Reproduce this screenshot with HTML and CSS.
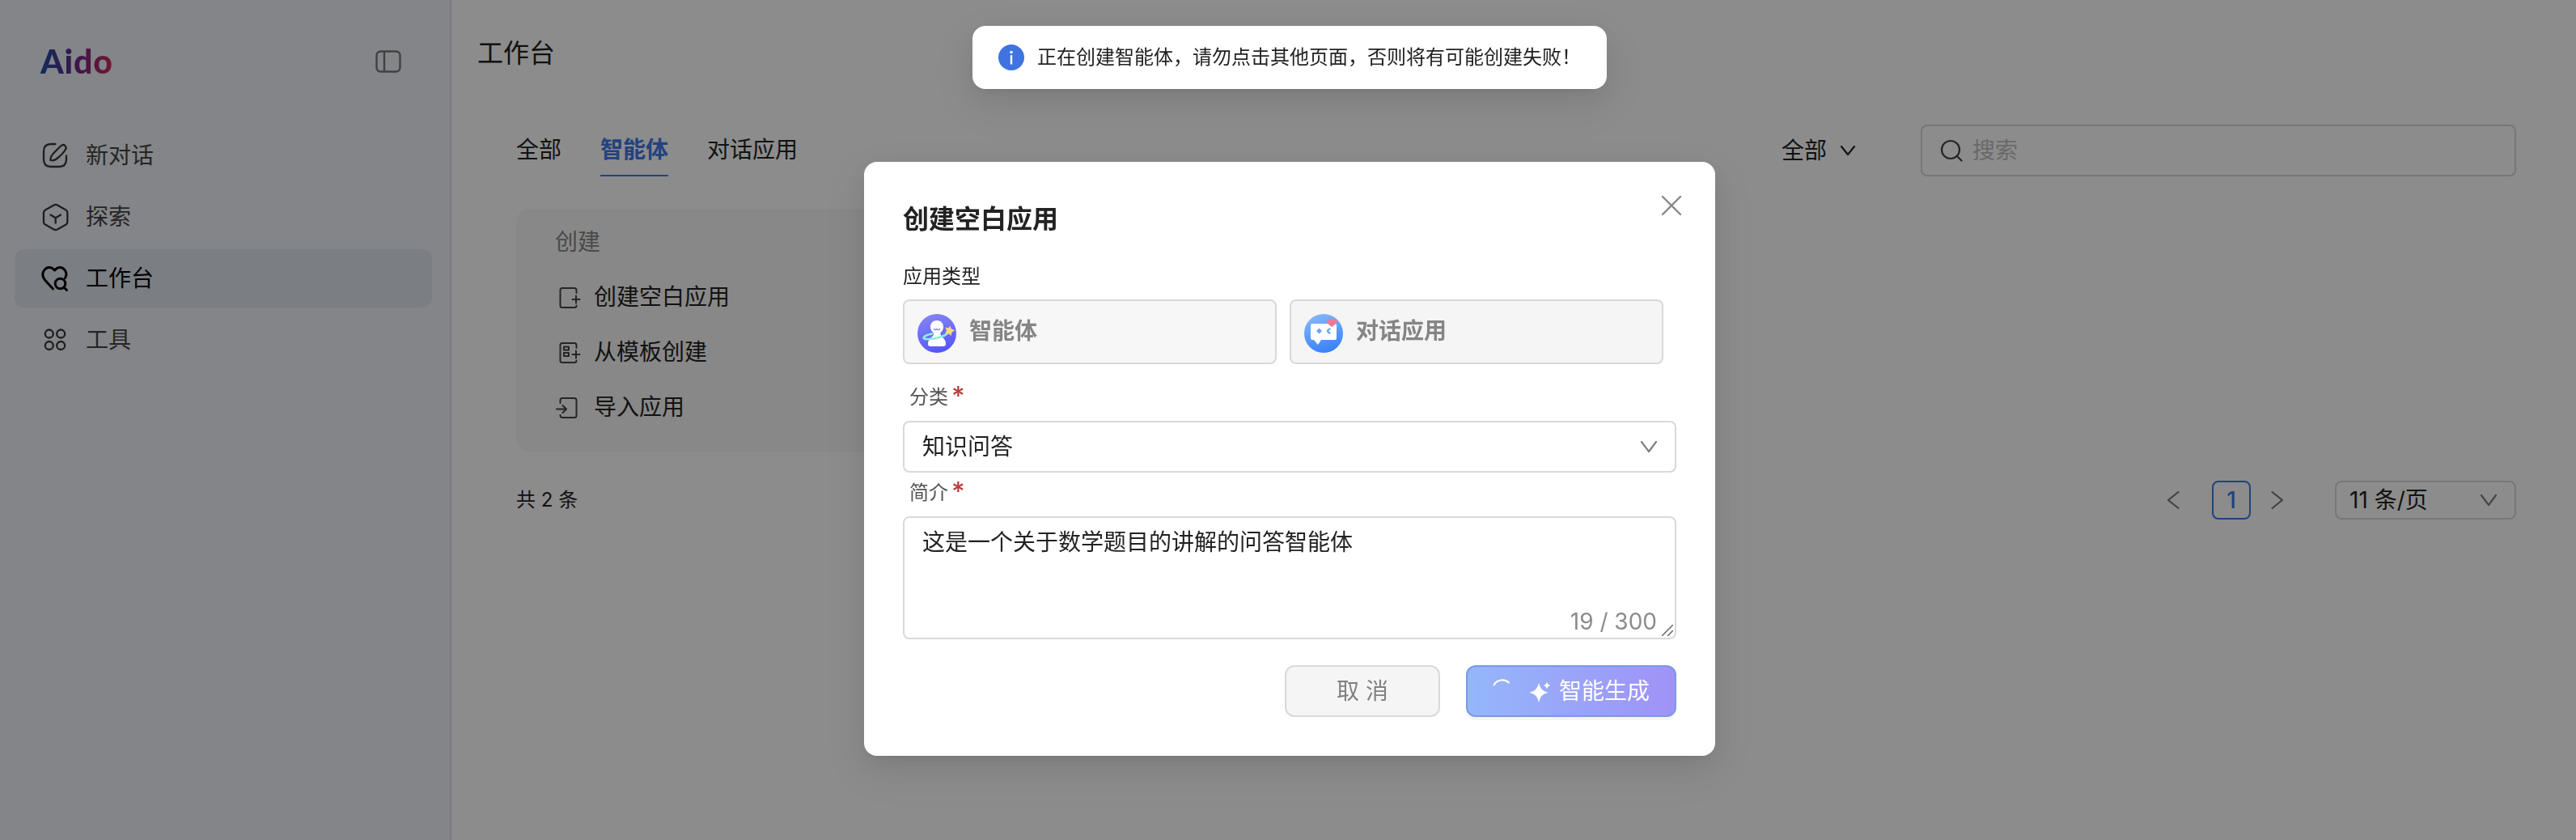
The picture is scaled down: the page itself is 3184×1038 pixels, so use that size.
FILE: index.html
```html
<!DOCTYPE html>
<html lang="zh-CN">
<head>
    <meta charset="UTF-8">
    <meta name="viewport" content="width=device-width, initial-scale=1.0">
    <title>Aido</title>
    <link rel="stylesheet" href="styles.css">
</head>
<body>
<div class="app">

    <aside class="sidebar">
        <div class="brand">
            <div class="logo">Aido</div>
            <svg class="toggle" viewBox="0 0 32 28"><rect x="1.5" y="1.5" width="29" height="25" rx="5"/><path d="M11 2v24"/></svg>
        </div>
        <nav>
            <a class="nav-item">
                <svg viewBox="0 0 36 36"><path d="M18.500 4H13Q4 4 4 13V23Q4 32 13 32H23Q32 32 32 23V18.500"/><path d="M12.500 24C12 20.500 14 17.500 17 14.500L25 6.500C29 3 33.500 7 30.500 11.500C28 15.500 24 19 21 21.500C18 24 15 25 12.500 24Z"/></svg>
                <span>新对话</span>
            </a>
            <a class="nav-item">
                <svg viewBox="0 0 36 36"><path d="M16.500 3.500Q18.700 2.300 21 3.500L31.500 9.500Q33.300 10.600 33.300 12.500V24.500Q33.300 26.500 31.500 27.500L21 33.500Q18.700 34.700 16.500 33.500L6 27.500Q4 26.500 4 24.500V12.500Q4 10.600 6 9.500Z"/><path d="M12.500 15.500L18.700 19.300L25 15.500M18.700 19.300V25.500"/></svg>
                <span>探索</span>
            </a>
            <a class="nav-item active">
                <svg viewBox="0 0 36 36"><path d="M15.500 31L5.500 20C-1 12 6 3.500 12 4.500C15 5 16 6.500 17.500 8C19 6.500 20 5 23 4.500C29 3.500 34.500 11 30.500 17.500"/><circle cx="24.500" cy="24.500" r="6.300"/><path d="M29 29L32.500 32.500"/></svg>
                <span>工作台</span>
            </a>
            <a class="nav-item">
                <svg viewBox="0 0 36 36"><circle cx="10.800" cy="10.500" r="5"/><circle cx="25.200" cy="10.500" r="5"/><circle cx="10.800" cy="25" r="5"/><circle cx="25.200" cy="25" r="5"/></svg>
                <span>工具</span>
            </a>
        </nav>
    </aside>

    <main>
        <h1>工作台</h1>
        <div class="content">
            <div class="toolbar">
                <div class="tabs">
                    <span class="tab">全部</span>
                    <span class="tab active">智能体</span>
                    <span class="tab">对话应用</span>
                </div>
                <div class="filters">
                    <div class="filter">全部
                        <svg viewBox="0 0 20 14"><path d="M2 2l8 10l8-10"/></svg>
                    </div>
                    <div class="search">
                        <svg viewBox="0 0 28 28"><circle cx="13" cy="13" r="11"/><path d="M21 21l5.500 5.500"/></svg>
                        <span>搜索</span>
                    </div>
                </div>
            </div>

            <section class="create-card">
                <div class="create-title">创建</div>
                <div class="create-item">
                    <svg viewBox="0 0 32 32"><path d="M26.500 11V7.500Q26.500 5 24 5H9Q6.500 5 6.500 7.500V26.500Q6.500 29 9 29H24Q26.500 29 26.500 26.500M26 14.500v9M21.500 19h9"/></svg>
                    <span>创建空白应用</span>
                </div>
                <div class="create-item">
                    <svg viewBox="0 0 32 32"><path d="M26.500 11V7.500Q26.500 5 24 5H9Q6.500 5 6.500 7.500V26.500Q6.500 29 9 29H24Q26.500 29 26.500 26.500M26 14.500v9M21.500 19h9M11 9.500h6v4h-6zM11 17h6v4h-6z"/></svg>
                    <span>从模板创建</span>
                </div>
                <div class="create-item">
                    <svg viewBox="0 0 32 32"><path d="M6.500 11V7.500Q6.500 5 9 5H24Q26.500 5 26.500 7.500V26.500Q26.500 29 24 29H9Q6.500 29 6.500 26M2 18.500h11.500M9.500 14l4.500 4.500l-4.500 4.500"/></svg>
                    <span>导入应用</span>
                </div>
            </section>

            <div class="pager">
                <div class="total">共 2 条</div>
                <div class="pages">
                    <svg class="arrow" viewBox="0 0 16 24"><path d="M14.500 2L2 12l12.500 10"/></svg>
                    <span class="page">1</span>
                    <svg class="arrow" viewBox="0 0 16 24"><path d="M1.500 2L14 12L1.500 22"/></svg>
                    <div class="page-size">11 条/页
                        <svg viewBox="0 0 22 16"><path d="M2 2l9 12l9-12"/></svg>
                    </div>
                </div>
            </div>
        </div>
    </main>
</div>

<div class="mask">
    <div class="modal">
        <svg class="close" viewBox="0 0 26 26"><path d="M2 2l22 22M24 2L2 24"/></svg>
        <h2>创建空白应用</h2>
        <div class="label type-label">应用类型</div>
        <div class="types">
            <div class="type selected">
                <svg viewBox="0 0 48 48">
                    <defs><linearGradient id="agent" x1="0.300" y1="0" x2="0.600" y2="1"><stop offset="0" stop-color="#8484f5"/><stop offset="1" stop-color="#5555f8"/></linearGradient></defs>
                    <circle cx="24" cy="24" r="24" fill="url(#agent)"/>
                    <path d="M24 8C29 8 32 11.500 32 16C32 19 30.500 21.500 28.500 23C28 25 29 27 31 29C34 31 35 34 35 37Q35 40 32 40H16Q13 40 13 37C13 34 14 31 17 29C20 27 20.500 25 19.500 23C17.500 21.500 16 19 16 16C16 11.500 19 8 24 8Z" fill="#fff"/>
                    <path d="M20.500 18.500q1.800 2 3.500 0q1.800 2 3.500 0" fill="none" stroke="#8a8cf0" stroke-width="1.500"/>
                    <path d="M18 24.500C6 27 5 31 12 31C19 31.500 33 28 37 24" fill="none" stroke="#8cf0da" stroke-width="2.500" stroke-linecap="round"/>
                    <path d="M40 14.500l2 4l4.500 1.500l-4 2.500l-1 4.500l-3-3l-4.500 .5l2-4l-1.500-4l4 1z" fill="#fbdc7c"/>
                </svg>
                <span>智能体</span>
            </div>
            <div class="type">
                <svg viewBox="0 0 48 48">
                    <defs><linearGradient id="chat" x1="0.300" y1="0" x2="0.600" y2="1"><stop offset="0" stop-color="#83b8f8"/><stop offset="1" stop-color="#3880f8"/></linearGradient></defs>
                    <circle cx="24" cy="24" r="24" fill="url(#chat)"/>
                    <path d="M10 12H38Q40 12 40 14V30Q40 32 38 32H21L17 38L12 32H10Q8 32 8 30V14Q8 12 10 12Z" fill="#fff"/>
                    <path d="M18.500 17.500l3.500 3.500l-3.500 3.500l-3.500-3.500z" fill="#6ba3f8"/>
                    <path d="M31.500 18.500q-5 2.500 0 5" fill="none" stroke="#6ba3f8" stroke-width="2.500"/>
                    <path d="M34 16C29 12.500 27.500 10 28.500 7.500C30 5 33 6 34.300 8C36 5 39 5 40.500 7.500C41.500 10.500 38 13.500 34 16Z" fill="#ee7799"/>
                </svg>
                <span>对话应用</span>
            </div>
        </div>

        <div class="label field-label">分类<i>*</i></div>
        <div class="select">知识问答
            <svg viewBox="0 0 22 16"><path d="M2 2l9 12l9-12"/></svg>
        </div>

        <div class="label field-label intro-label">简介<i>*</i></div>
        <div class="textarea">这是一个关于数学题目的讲解的问答智能体
            <span class="count">19 / 300</span>
            <svg class="grip" viewBox="0 0 14 14"><path d="M0.500 13.500l13-13M7.500 13.500l6-6"/></svg>
        </div>

        <div class="footer">
            <button class="btn cancel">取 消</button>
            <button class="btn generate">
                <svg class="spinner" viewBox="0 0 28 28"><path d="M4.500 8.500A12 12 0 0 1 23 5.500"/></svg>
                <svg class="sparkle" viewBox="0 0 28 28"><path d="M12 4Q14 14 23.500 15.800Q14 17.500 12 28Q10 17.500 0.500 15.800Q10 14 12 4Z"/><path d="M22 2.500Q22.700 6 26.300 7Q22.700 8 22 11.500Q21.300 8 17.700 7Q21.300 6 22 2.500Z"/></svg>
                <span>智能生成</span>
            </button>
        </div>
    </div>
</div>

<div class="toast">
    <svg viewBox="0 0 32 32"><circle cx="16" cy="16" r="16" fill="#3f73e0"/><circle cx="16" cy="9.500" r="1.800" fill="#fff"/><path d="M16 14v9.500" stroke="#fff" stroke-width="2.400" stroke-linecap="round"/></svg>
    <span>正在创建智能体，请勿点击其他页面，否则将有可能创建失败！</span>
</div>
</body>
</html>
```

FILE: styles.css
```css
*{
    margin: 0;
    padding: 0;
    box-sizing: border-box;
}
body{
    font-family: Inter, "Noto Sans CJK SC", sans-serif;
    font-size: 28px;
    line-height: 44px;
    color: #222;
    background: #fff;
    overflow: hidden;
}
svg{
    display: block;
    flex: none;
    fill: none;
    stroke-linecap: round;
    stroke-linejoin: round;
}
.app{
    display: flex;
    height: 100vh;
}

/* sidebar */
.sidebar{
    width: 558px;
    flex: none;
    background: #f0f2f7;
    border-right: 2px solid #dcdfe6;
    padding: 48px 22px 0 18px;
}
.brand{
    display: flex;
    justify-content: space-between;
    align-items: center;
    height: 56px;
    padding: 0 38px 0 32px;
    margin-bottom: 52px;
}
.logo{
    font-family: Lato, sans-serif;
    font-size: 41px;
    font-weight: 900;
    line-height: 56px;
    letter-spacing: 0.8px;
    background-image: linear-gradient(to right, #1f4fa8, #6b2a8a 50%, #d02c58);
    background-clip: text;
    -webkit-background-clip: text;
    color: transparent;
}
.toggle{
    width: 32px;
    height: 28px;
    stroke: #777;
    stroke-width: 2.4;
}
.nav-item{
    display: flex;
    align-items: center;
    gap: 20px;
    height: 72px;
    padding-left: 32px;
    margin-bottom: 4px;
    border-radius: 12px;
    color: #444;
}
.nav-item svg{
    width: 36px;
    height: 36px;
    stroke: #383838;
    stroke-width: 2.3;
}
.nav-item.active{
    background: #e0e5ee;
    color: #000;
}
.nav-item.active svg{
    stroke: #000;
    stroke-width: 3;
}

/* workbench */
main{
    flex: 1;
    padding: 42px 74px 0 32px;
}
h1{
    font-size: 32px;
    font-weight: 400;
    line-height: 48px;
}
.content{
    padding-left: 48px;
}
.toolbar{
    display: flex;
    justify-content: space-between;
    height: 64px;
    margin-top: 64px;
}
.tabs{
    display: flex;
    gap: 48px;
}
.tab{
    height: 64px;
    line-height: 62px;
}
.tab.active{
    color: #3f78e6;
    font-weight: 600;
    border-bottom: 2px solid #3f78e6;
}
.filters{
    display: flex;
    gap: 80px;
}
.filter{
    display: flex;
    align-items: center;
    gap: 16px;
}
.filter svg{
    width: 20px;
    height: 14px;
    stroke: #222;
    stroke-width: 2.2;
}
.search{
    display: flex;
    align-items: center;
    gap: 12px;
    width: 736px;
    height: 64px;
    padding-left: 22px;
    border: 2px solid #d9d9d9;
    border-radius: 8px;
    color: #bfbfbf;
}
.search svg{
    width: 28px;
    height: 28px;
    stroke: #444;
    stroke-width: 2.2;
}
.create-card{
    width: 560px;
    height: 300px;
    margin-top: 40px;
    padding: 19px 48px;
    border-radius: 16px;
    background: #f7f7f7;
}
.create-title{
    color: #888;
    margin-bottom: 24px;
}
.create-item{
    display: flex;
    align-items: center;
    gap: 16px;
    height: 44px;
    margin-bottom: 24px;
}
.create-item svg{
    width: 32px;
    height: 32px;
    stroke: #444;
    stroke-width: 2;
}
.pager{
    display: flex;
    justify-content: space-between;
    align-items: center;
    height: 48px;
    margin-top: 36px;
}
.total{
    font-size: 24px;
}
.pages{
    display: flex;
    align-items: center;
}
.arrow{
    width: 16px;
    height: 24px;
    stroke: #777;
    stroke-width: 2.2;
}
.page{
    width: 48px;
    height: 48px;
    margin: 0 25px 0 40px;
    border: 2px solid #3f78e6;
    border-radius: 8px;
    color: #3f78e6;
    text-align: center;
    font-weight: 500;
}
.page-size{
    display: flex;
    justify-content: space-between;
    align-items: center;
    width: 224px;
    height: 48px;
    margin-left: 63px;
    padding: 0 21px 0 16px;
    border: 2px solid #d9d9d9;
    border-radius: 8px;
}
.page-size svg,
.select svg{
    width: 22px;
    height: 16px;
    stroke: #808080;
    stroke-width: 2.2;
}

/* dialog */
.mask{
    position: fixed;
    inset: 0;
    padding-top: 200px;
    background: rgba(0,0,0,0.45);
}
.modal{
    position: relative;
    left: 2px;
    width: 1052px;
    height: 734px;
    margin: 0 auto;
    padding: 48px;
    border-radius: 16px;
    background: #fff;
    box-shadow: 0 12px 32px rgba(0,0,0,0.08), 0 6px 12px -8px rgba(0,0,0,0.12), 0 18px 56px 16px rgba(0,0,0,0.05);
}
.close{
    position: absolute;
    top: 41px;
    right: 41px;
    width: 26px;
    height: 26px;
    stroke: #888;
    stroke-width: 2.4;
}
h2{
    font-size: 32px;
    font-weight: 600;
    line-height: 46px;
    height: 48px;
}
.label{
    font-size: 24px;
    height: 40px;
    line-height: 40px;
    margin-bottom: 8px;
}
.type-label{
    margin-top: 26px;
}
.field-label{
    display: flex;
    margin-top: 22px;
    padding-left: 8px;
    color: #555;
    line-height: 38px;
}
.field-label i{
    margin-left: 4px;
    font-family: Inter, sans-serif;
    font-size: 32px;
    line-height: 36px;
    font-style: normal;
    font-weight: 500;
    color: #b8403c;
}
.intro-label{
    margin-top: 6px;
}
.types{
    display: flex;
    gap: 16px;
}
.type{
    display: flex;
    gap: 16px;
    width: 462px;
    height: 80px;
    padding: 16px;
    border: 2px solid #d9d9d9;
    border-radius: 8px;
    background: #f5f5f5;
    color: #858585;
    font-weight: 600;
    line-height: 42px;
}
.type.selected{
    background: #f7f7f7;
}
.type svg{
    width: 48px;
    height: 48px;
}
.select{
    display: flex;
    justify-content: space-between;
    align-items: center;
    height: 64px;
    padding: 0 21px 0 22px;
    border: 2px solid #d9d9d9;
    border-radius: 8px;
}
.textarea{
    position: relative;
    height: 152px;
    padding: 8px 22px;
    border: 2px solid #d9d9d9;
    border-radius: 8px;
}
.count{
    position: absolute;
    right: 22px;
    bottom: -2px;
    color: #8c8c8c;
}
.grip{
    position: absolute;
    right: 2px;
    bottom: 2px;
    width: 14px;
    height: 14px;
    stroke: #666;
    stroke-width: 1.5;
}
.footer{
    display: flex;
    justify-content: flex-end;
    gap: 32px;
    margin-top: 32px;
}
.btn{
    height: 64px;
    border-radius: 12px;
    font: inherit;
}
.cancel{
    width: 192px;
    border: 2px solid #d9d9d9;
    background: #f5f5f5;
    color: #808080;
}
.generate{
    display: flex;
    align-items: center;
    width: 260px;
    padding-left: 28px;
    border: 2px solid #7b99e2;
    background: linear-gradient(to right, #94b7fa, #a092f7);
    color: #fff;
    box-shadow: 0 4px 0 rgba(0,0,0,0.04);
}
.spinner{
    width: 28px;
    height: 28px;
    margin-bottom: 4px;
    stroke: #fff;
    stroke-width: 2;
}
.sparkle{
    width: 28px;
    height: 28px;
    margin: 0 9px 0 20px;
    fill: #fff;
}

/* message */
.toast{
    position: fixed;
    top: 32px;
    left: 1202px;
    display: flex;
    align-items: center;
    gap: 16px;
    width: 784px;
    height: 78px;
    padding: 0 32px;
    border-radius: 16px;
    background: #fff;
    font-size: 24px;
    white-space: nowrap;
    box-shadow: 0 12px 32px rgba(0,0,0,0.08), 0 6px 12px -8px rgba(0,0,0,0.12), 0 18px 56px 16px rgba(0,0,0,0.05);
}
.toast svg{
    width: 32px;
    height: 32px;
}
```
